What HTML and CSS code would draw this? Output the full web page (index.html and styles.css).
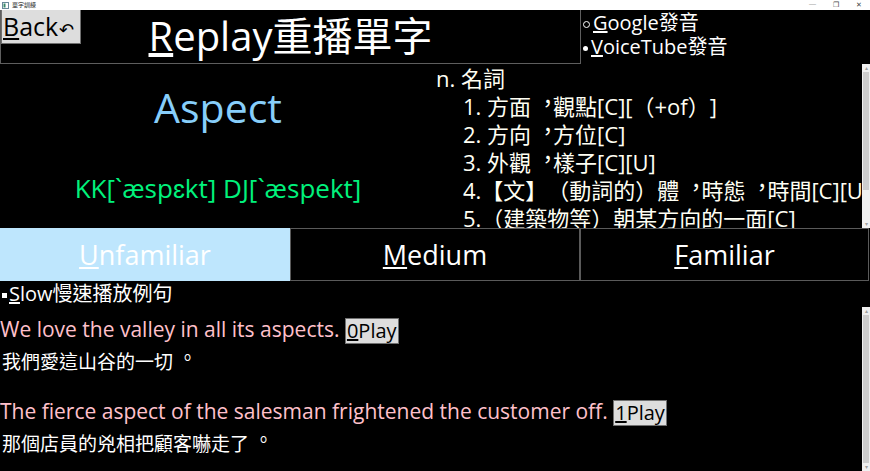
FILE: index.html
```html
<!DOCTYPE html>
<html lang="zh-Hant-TW">
<head>
<meta charset="utf-8">
<title>單字訓練</title>
<link rel="stylesheet" href="styles.css">
</head>
<body>
<div class="window">
  <div class="titlebar">
    <div class="tb-left">
      <svg class="tb-icon" width="7" height="7" viewBox="0 0 7 7"><rect x="0.5" y="0.5" width="6" height="6" fill="#fff" stroke="#6a8a9a"/><rect x="1.5" y="1.5" width="2" height="4" fill="#3a8a6a"/></svg>
      <span class="tb-title">單字訓練</span>
    </div>
    <div class="tb-controls">
      <span class="tb-btn">─</span>
      <span class="tb-btn">❐</span>
      <span class="tb-btn">✕</span>
    </div>
  </div>

  <div class="app">
    <div class="top">
      <div class="titlebox">
        <button class="back"><u>B</u>ack<span class="undo">↶</span></button>
        <div class="title"><u>R</u>eplay重播單字</div>
        <div></div>
      </div>
      <ul class="links">
        <li class="hollow"><u>G</u>oogle發音</li>
        <li class="solid"><u>V</u>oiceTube發音</li>
      </ul>
    </div>

    <div class="middle">
      <div class="word">
        <div class="headword">Aspect</div>
        <div class="phon">KK[`æspɛkt] DJ[`æspekt]</div>
      </div>
      <div class="defs">
        <div class="defs-text">
          <div class="pos">n. 名詞</div>
          <div class="def">1. 方面<span class="pc">，</span>觀點[C][（+of）]</div>
          <div class="def">2. 方向<span class="pc">，</span>方位[C]</div>
          <div class="def">3. 外觀<span class="pc">，</span>樣子[C][U]</div>
          <div class="def">4.【文】（動詞的）體<span class="pc">，</span>時態<span class="pc">，</span>時間[C][U]</div>
          <div class="def">5.（建築物等）朝某方向的一面[C]</div>
        </div>
        <div class="scrollbar">
          <div class="sb-arrow">▴</div>
          <div class="sb-track"><div class="sb-thumb thumb-top"></div></div>
          <div class="sb-arrow">▾</div>
        </div>
      </div>
    </div>

    <div class="levels">
      <button class="level active"><u>U</u>nfamiliar</button>
      <button class="level"><u>M</u>edium</button>
      <button class="level"><u>F</u>amiliar</button>
    </div>

    <div class="slow"><span class="sq"></span><u>S</u>low慢速播放例句</div>

    <div class="examples">
      <div class="ex-list">
        <div class="example">
          <div class="en">We love the valley in all its aspects. <button class="play"><u>0</u>Play</button></div>
          <div class="zh">我們愛這山谷的一切<span class="pc">。</span></div>
        </div>
        <div class="example">
          <div class="en">The fierce aspect of the salesman frightened the customer off. <button class="play"><u>1</u>Play</button></div>
          <div class="zh">那個店員的兇相把顧客嚇走了<span class="pc">。</span></div>
        </div>
      </div>
      <div class="scrollbar">
        <div class="sb-arrow">▴</div>
        <div class="sb-track"><div class="sb-thumb thumb-full"></div></div>
        <div class="sb-arrow">▾</div>
      </div>
    </div>
  </div>
</div>
</body>
</html>
```

FILE: styles.css
```css
* { box-sizing: border-box; }

html, body {
  margin: 0;
  padding: 0;
  width: 870px;
  height: 471px;
  overflow: hidden;
  background: #000;
  font-family: "Open Sans", "Noto Sans CJK TC", sans-serif;
  text-spacing-trim: space-all;
}

.window {
  width: 870px;
  height: 471px;
  display: flex;
  flex-direction: column;
}

/* title bar */
.titlebar {
  height: 10px;
  background: #fff;
  display: flex;
  justify-content: space-between;
  align-items: center;
  font-size: 6px;
  color: #222;
  line-height: 10px;
}
.tb-left {
  display: flex;
  align-items: center;
  gap: 3px;
  padding-left: 2px;
}
.tb-icon { display: block; }
.tb-title { font-family: "Noto Sans CJK TC", sans-serif; font-size: 6px; }
.tb-controls {
  display: flex;
  gap: 17px;
  padding-right: 8px;
  font-size: 7px;
  color: #444;
}

.app {
  flex: 1;
  display: flex;
  flex-direction: column;
  color: #fff;
}

/* centred full-width punctuation (Traditional Chinese style) */
.pc {
  position: relative;
  left: 0.26em;
  top: -0.2em;
}

/* top */
.top {
  height: 54px;
  display: flex;
}
.titlebox {
  width: 581px;
  border: 1px solid #5e5e5e;
  border-top: none;
  display: grid;
  grid-template-columns: 1fr auto 1fr;
  align-items: start;
}
.back {
  justify-self: start;
  width: 80px;
  height: 34px;
  margin: 0;
  padding: 0 0 0 1px;
  background: #dddddd;
  border: 1px solid #707070;
  border-top: none;
  color: #000;
  font-family: inherit;
  font-size: 25px;
  line-height: 32px;
  text-align: left;
  white-space: nowrap;
}
.back .undo {
  font-size: 18px;
  margin-left: 1px;
}
.title {
  font-size: 40px;
  line-height: 52px;
  white-space: nowrap;
}
.links {
  list-style: none;
  margin: 0;
  padding: 1px 0 0 1px;
  font-size: 20px;
  line-height: 24px;
}
.links li { display: flex; align-items: center; }
.links li::before {
  content: "";
  display: block;
  width: 5px;
  height: 5px;
  border-radius: 50%;
  margin: 2px 3px 0 1px;
}
.links .hollow::before { border: 1px solid #fff; }
.links .solid::before { background: #fff; }

/* middle */
.middle {
  height: 164px;
  display: flex;
}
.word {
  width: 436px;
  display: flex;
  flex-direction: column;
  align-items: center;
}
.headword {
  color: #87cefa;
  font-size: 41px;
  line-height: 54px;
  margin-top: 16px;
}
.phon {
  color: #00f27c;
  font-size: 26px;
  line-height: 32px;
  margin-top: 38px;
  white-space: nowrap;
}
.defs {
  flex: 1;
  display: flex;
  min-width: 0;
}
.defs-text {
  flex: 1;
  overflow: hidden;
  white-space: nowrap;
  font-size: 22px;
  line-height: 28px;
  color: #fffff4;
}
.def { padding-left: 27px; }

.scrollbar {
  width: 8px;
  background: #f0f0f0;
  display: flex;
  flex-direction: column;
}
.sb-arrow {
  height: 8px;
  font-size: 6px;
  line-height: 8px;
  text-align: center;
  color: #a0a0a0;
}
.sb-track {
  flex: 1;
  display: flex;
  flex-direction: column;
  padding: 0 1px;
}
.sb-thumb { background: #cdcdcd; }
.thumb-top { height: 118px; }
.thumb-full { flex: 1; }

/* levels */
.levels {
  height: 53px;
  display: grid;
  grid-template-columns: 290px 290px 289px;
}
.level {
  margin: 0;
  background: #000;
  border: 1px solid #5a5a5a;
  color: #fff;
  font-family: inherit;
  font-size: 27px;
  line-height: 34px;
  padding: 0;
}
.level.active {
  background: #bee6fd;
  border-color: #bee6fd;
  color: #fff;
}

/* slow */
.slow {
  height: 26px;
  font-size: 20px;
  line-height: 26px;
  padding-left: 2px;
  display: flex;
  align-items: center;
}
.sq {
  display: block;
  width: 5px;
  height: 5px;
  background: #fff;
  margin: 2px 2px 0 0;
}

/* examples */
.examples {
  flex: 1;
  display: flex;
  min-height: 0;
}
.ex-list {
  flex: 1;
  padding-top: 5px;
  display: flex;
  flex-direction: column;
  gap: 16px;
}
.en {
  color: #ffc0cb;
  font-size: 21px;
  line-height: 34px;
  white-space: nowrap;
}
.zh {
  font-size: 19px;
  line-height: 32px;
  padding-left: 2px;
}
.play {
  margin: 0;
  padding: 0 1px;
  height: 26px;
  background: #dddddd;
  border: 1px solid #707070;
  color: #000;
  font-family: "Open Sans", sans-serif;
  font-size: 20px;
  line-height: 24px;
  vertical-align: middle;
}
```
